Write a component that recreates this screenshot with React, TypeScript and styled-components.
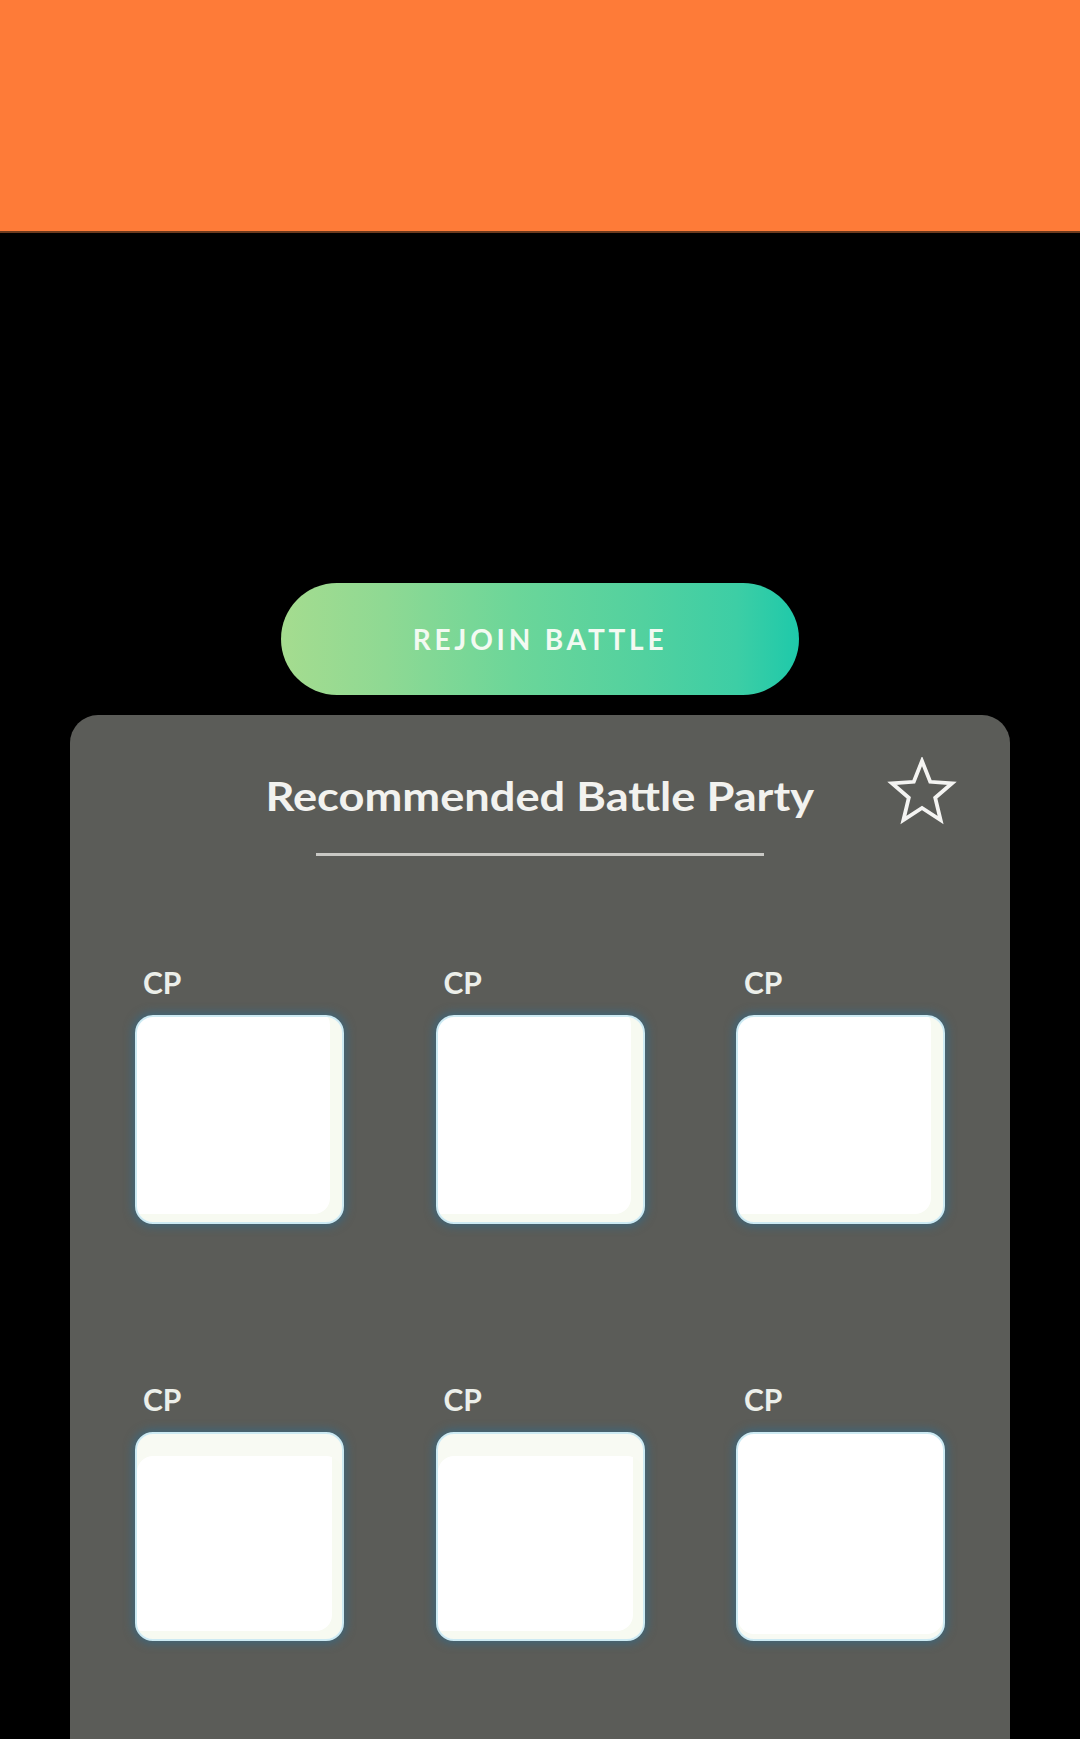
import React from 'react';
import styled, { createGlobalStyle } from 'styled-components';

const GlobalStyle = createGlobalStyle`
  html, body {
    margin: 0;
    padding: 0;
    background: #000;
  }
  body {
    font-family: Lato, "Open Sans", sans-serif;
  }
`;

const Page = styled.div`
  width: 1080px;
  height: 1739px;
  overflow: hidden;
  background: #000;
  display: flex;
  flex-direction: column;
  align-items: center;
`;

const TopBar = styled.div`
  width: 100%;
  height: 231px;
  background: #fe7b38;
  border-bottom: 2px solid #6e3b1e;
  flex-shrink: 0;
`;

const RejoinButton = styled.button`
  margin-top: 350px;
  width: 518px;
  height: 112px;
  border: none;
  border-radius: 56px;
  background: linear-gradient(
    90deg,
    #a5dc8f 0%,
    #8fd993 20%,
    #6cd699 45%,
    #52d19f 70%,
    #3dcea5 88%,
    #1ec9aa 100%
  );
  color: #f3faf2;
  font-family: Lato, sans-serif;
  font-weight: 700;
  font-size: 28px;
  letter-spacing: 3.8px;
  cursor: pointer;
  flex-shrink: 0;
`;

const Panel = styled.section`
  margin-top: 20px;
  width: 940px;
  flex: 1;
  background: #5b5c58;
  border-radius: 28px 28px 0 0;
  padding: 57px 65px 0;
  box-sizing: border-box;
`;

const Header = styled.div`
  display: grid;
  grid-template-columns: 1fr auto 1fr;
  align-items: start;
`;

const Title = styled.h2`
  grid-column: 2;
  margin: 0;
  font-family: Lato, sans-serif;
  font-weight: 700;
  font-size: 40px;
  line-height: 48px;
  color: #f2f2ef;
  transform: scaleX(1.13);
`;

const StarButton = styled.div`
  grid-column: 3;
  justify-self: end;
  width: 70px;
  height: 70px;
  margin: -15px -12px -30px 0;
  display: flex;
`;

const Divider = styled.div`
  width: 448px;
  height: 3px;
  background: #c9c9c5;
  margin: 33px auto 0;
`;

const Grid = styled.div`
  margin-top: 108px;
  display: grid;
  grid-template-columns: repeat(3, 209px);
  justify-content: space-between;
  row-gap: 157px;
`;

const Slot = styled.div`
  display: flex;
  flex-direction: column;
`;

const CpLabel = styled.span`
  font-family: Lato, sans-serif;
  font-weight: 700;
  font-size: 30px;
  line-height: 36px;
  color: #ecefea;
  padding-left: 8px;
`;

const Card = styled.div<{ $tint: 'right' | 'top' | 'none' }>`
  margin-top: 15px;
  width: 209px;
  height: 209px;
  box-sizing: border-box;
  border-radius: 18px;
  background: #fff;
  border: 2px solid #cdeaf3;
  box-shadow:
    0 0 8px 3px rgba(58, 104, 128, 0.8),
    ${(p) =>
      p.$tint === 'right'
        ? 'inset -12px -8px 0 #f7faf1'
        : p.$tint === 'top'
          ? 'inset 0 22px 0 #f8faf3, inset -10px -8px 0 #f7faf1'
          : 'inset 0 -5px 0 #f8faf3'};
`;

const Star = () => (
  <svg width="70" height="70" viewBox="0 0 70 70" fill="none">
    <path
      d="M35 4 L43.2 24.8 L65 26.3 L48.2 40.7 L53.6 63 L35 51 L16.4 63 L21.8 40.7 L5 26.3 L26.8 24.8 Z"
      stroke="#f4f4f2"
      strokeWidth="3.8"
      strokeLinejoin="miter"
    />
  </svg>
);

const tints: Array<'right' | 'top' | 'none'> = ['right', 'right', 'right', 'top', 'top', 'none'];

export default function App() {
  return (
    <>
      <GlobalStyle />
      <Page>
        <TopBar />
        <RejoinButton>REJOIN BATTLE</RejoinButton>
        <Panel>
          <Header>
            <Title>Recommended Battle Party</Title>
            <StarButton>
              <Star />
            </StarButton>
          </Header>
          <Divider />
          <Grid>
            {tints.map((t, i) => (
              <Slot key={i}>
                <CpLabel>CP</CpLabel>
                <Card $tint={t} />
              </Slot>
            ))}
          </Grid>
        </Panel>
      </Page>
    </>
  );
}
